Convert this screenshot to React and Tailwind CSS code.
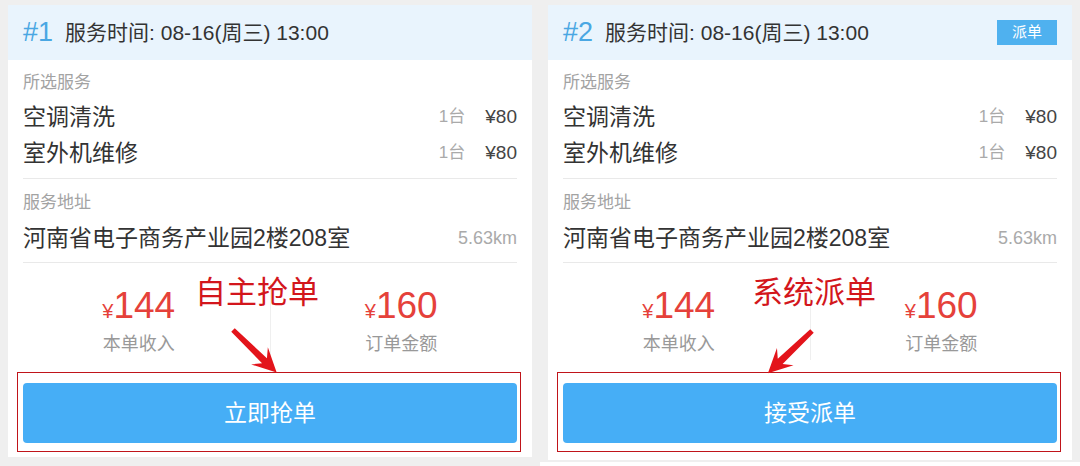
import React from "react";

const font = { fontFamily: '"Liberation Sans", "Noto Sans CJK SC", sans-serif' };

const Arrow = ({ x, y, angle }) => (
  <svg className="absolute left-0 top-0 pointer-events-none" width="524" height="460">
    <g transform={`translate(${x} ${y}) rotate(${angle})`}>
      <polygon points="0,-2.5 44,-3.5 37,-12 61,0 37,12 44,3.5 0,2.5" fill="#e3141b" />
    </g>
  </svg>
);

const OrderCard = ({ no, badge, note, noteLeft, arrow, action, extra }) => (
  <div className={`relative w-[524px] bg-white ${extra}`}>
    {/* header */}
    <div className="h-[55px] bg-[#e9f4fd] px-[15px] flex items-center">
      <span className="text-[27px] text-[#4aa7e3] leading-none">#{no}</span>
      <span className="ml-[12px] text-[21px] text-[#333]">服务时间: 08-16(周三) 13:00</span>
      {badge && (
        <span className="ml-auto w-[60px] h-[25px] flex items-center justify-center bg-[#4fb1ef] text-white text-[15px]">
          {badge}
        </span>
      )}
    </div>

    <div className="px-[15px]">
      <div className="pt-[13px] pb-[7px] border-b border-[#e9e9e9]">
        <div className="h-[20px] leading-[20px] text-[17px] text-[#a3a3a3]">所选服务</div>
        <div className="mt-[6px]">
          {["空调清洗", "室外机维修"].map((s) => (
            <div key={s} className="h-[36px] flex items-center">
              <span className="text-[23px] text-[#333]">{s}</span>
              <span className="ml-auto text-[17px] text-[#aaa]">1台</span>
              <span className="ml-[20px] text-[19px] text-[#444]">¥80</span>
            </div>
          ))}
        </div>
      </div>
      <div className="pt-[14px] pb-[6px] border-b border-[#e9e9e9]">
        <div className="h-[20px] leading-[20px] text-[17px] text-[#a3a3a3]">服务地址</div>
        <div className="mt-[7px] h-[36px] flex items-center">
          <span className="text-[23px] text-[#333]">河南省电子商务产业园2楼208室</span>
          <span className="ml-auto text-[18px] text-[#aaa]">5.63km</span>
        </div>
      </div>
    </div>

    {/* stats */}
    <div className="pt-[20px] flex">
      <div className="flex-1 flex flex-col items-center pt-[3px]">
        <div className="h-[40px] flex items-end text-[#e5413a]">
          <span className="text-[20px] leading-[30px]">¥</span>
          <span className="text-[37px] leading-[40px] font-medium">144</span>
        </div>
        <div className="mt-[8px] h-[20px] leading-[20px] text-[18px] text-[#999]">本单收入</div>
      </div>
      <div className="w-px h-[77px] bg-[#efefef]" />
      <div className="flex-1 flex flex-col items-center pt-[3px]">
        <div className="h-[40px] flex items-end text-[#e5413a]">
          <span className="text-[20px] leading-[30px]">¥</span>
          <span className="text-[37px] leading-[40px] font-medium">160</span>
        </div>
        <div className="mt-[8px] h-[20px] leading-[20px] text-[18px] text-[#999]">订单金额</div>
      </div>
    </div>

    {/* action */}
    <div className="relative mx-[15px] mt-[23px]">
      <button className="w-full h-[60px] rounded-[4px] bg-[#46aef6] text-white text-[23px]">{action}</button>
      <div className="absolute left-[-6px] right-[-4px] top-[-11px] bottom-[-9px] border border-[#c0141a] pointer-events-none" />
    </div>

    {/* annotation */}
    <div className={`absolute top-[268px] ${noteLeft} text-[31px] text-[#d3161c] leading-[40px]`}>{note}</div>
    <Arrow {...arrow} />
  </div>
);

export default function App() {
  return (
    <div className="w-[1080px] h-[466px] bg-[#efefef] flex overflow-hidden" style={font}>
      <div className="w-[540px] px-2 pt-[5px]">
        <OrderCard
          no="1"
          note="自主抢单"
          noteLeft="left-[187px]"
          arrow={{ x: 225, y: 325, angle: 44.3 }}
          action="立即抢单"
          extra="h-[452px]"
        />
      </div>
      <div className="w-[540px] flex flex-col">
        <div className="px-2 pt-[5px]">
          <OrderCard
            no="2"
            badge="派单"
            note="系统派单"
            noteLeft="left-[204px]"
            arrow={{ x: 264, y: 326, angle: 136.3 }}
            action="接受派单"
            extra="h-[455px]"
          />
        </div>
        <div className="mt-auto h-[4px] bg-white" />
      </div>
    </div>
  );
}
